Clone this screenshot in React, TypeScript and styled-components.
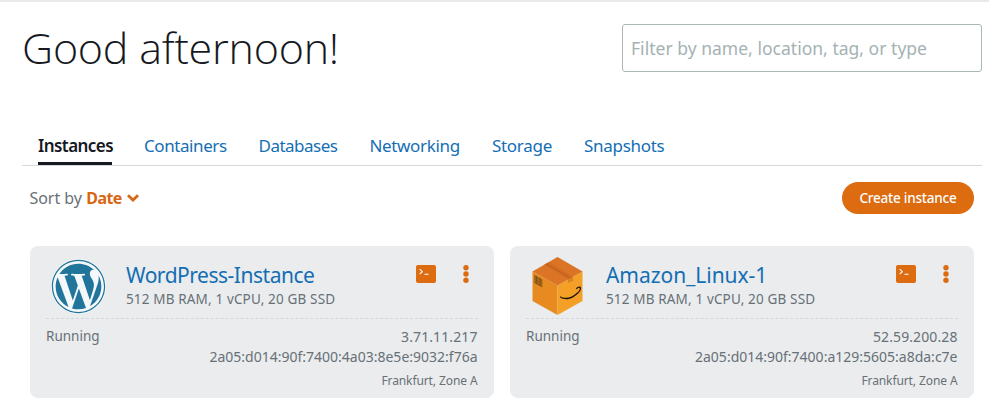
import React from "react";
import styled, { createGlobalStyle } from "styled-components";
import { FaWordpress } from "react-icons/fa";

const GlobalStyle = createGlobalStyle`
  * { box-sizing: border-box; }
  body { margin: 0; background: #fff; font-family: "Noto Sans", "Open Sans", sans-serif; color: #687078; }
  button, input { font-family: inherit; }
`;

const Page = styled.main`
  height: 411px;
  overflow: hidden;
  padding: 22px 7px 0 22px;
  border-top: 2px solid #e9e9ea;
`;

const Header = styled.header`
  display: flex;
  justify-content: space-between;
  height: 108px;
`;

const Title = styled.h1`
  margin: -8px 0 0;
  font-family: "Open Sans", sans-serif;
  font-size: 43px;
  font-weight: 300;
  line-height: 64px;
  letter-spacing: -0.22px;
  color: #16191f;
  white-space: nowrap;
`;

const Filter = styled.input`
  width: 360px;
  height: 48px;
  padding: 0 8px 1px;
  border: 1px solid #aab7b8;
  border-radius: 3px;
  font-size: 17.5px;
  letter-spacing: 0.02px;
  outline: none;
  color: #16191f;
  &::placeholder { color: #a4b2b3; opacity: 1; }
`;

const Tabs = styled.nav`
  display: flex;
  gap: 32px;
  height: 34px;
  padding-left: 16px;
  border-bottom: 1px solid #d5dbdb;
`;

const Tab = styled.a<{ $width: number; $spacing: number; $active?: boolean }>`
  width: ${(p) => p.$width}px;
  height: 33px;
  font-size: 17px;
  line-height: 28px;
  letter-spacing: ${(p) => p.$spacing}px;
  white-space: nowrap;
  font-weight: ${(p) => (p.$active ? 600 : 400)};
  color: ${(p) => (p.$active ? "#16191f" : "#146eb4")};
  border-bottom: ${(p) => (p.$active ? "3px solid #16191f" : "none")};
`;

const Toolbar = styled.div`
  display: flex;
  justify-content: space-between;
  align-items: center;
  height: 32px;
  margin: 16px 8px 32px 7.5px;
`;

const Sort = styled.div`
  display: flex;
  align-items: center;
  font-size: 16px;
  line-height: 24px;
  letter-spacing: -0.05px;
  white-space: nowrap;
  svg { margin-left: 4px; }
`;

const SortValue = styled.b`
  margin-left: 4.5px;
  font-weight: 700;
  letter-spacing: -0.6px;
  color: #d86613;
`;

const CreateButton = styled.button`
  width: 132px;
  height: 32px;
  padding: 0;
  border: 0;
  border-radius: 16px;
  background: #dd6b10;
  color: #fff;
  font-size: 13.5px;
  font-weight: 500;
  letter-spacing: -0.22px;
`;

const Cards = styled.section`
  display: grid;
  grid-template-columns: 464px 464px;
  gap: 16px;
  margin-left: 8px;
`;

const Card = styled.article`
  height: 152px;
  padding: 8px 16px;
  border-radius: 8px;
  background: #eaeced;
`;

const CardTop = styled.div`
  display: flex;
  height: 65px;
  border-bottom: 1px dashed #d2d8d9;
`;

const Logo = styled.div`
  width: 64px;
  height: 64px;
  flex: none;
  display: grid;
  place-items: center;
`;

const WordPressDisc = styled.div`
  display: grid;
  width: 55px;
  height: 55px;
  border-radius: 50%;
  background: #f4f8fa;
  color: #21759b;
`;

const Summary = styled.div`
  flex: 1;
  margin: 6px 0 0 16px;
  white-space: nowrap;
`;

const Name = styled.h2<{ $spacing: number }>`
  margin: 0;
  font-size: 21px;
  font-weight: 400;
  line-height: 30px;
  letter-spacing: ${(p) => p.$spacing}px;
  color: #146eb4;
`;

const Spec = styled.div`
  font-size: 13.5px;
  line-height: 18px;
  letter-spacing: 0.15px;
`;

const Actions = styled.div`
  display: flex;
  gap: 27px;
  margin: 11px 9px 0 0;
`;

const Details = styled.div`
  display: flex;
  justify-content: space-between;
  padding-top: 7px;
  font-size: 13.5px;
  line-height: 21px;
`;

const Address = styled.div`
  text-align: right;
  font-size: 14px;
  line-height: 20px;
  padding: 1px 0.5px 0 0;
`;

const IPv4 = styled.div`
  letter-spacing: 0.1px;
`;

const IPv6 = styled.div`
  white-space: nowrap;
`;

const Zone = styled.div`
  margin-top: 5px;
  font-size: 12px;
  line-height: 18px;
  letter-spacing: -0.1px;
`;

const Chevron = () => (
  <svg width="14" height="10" viewBox="0 0 14 10" fill="none">
    <path d="M2 2.2 7 7l5-4.8" stroke="#d86613" strokeWidth="2.8" />
  </svg>
);

const Terminal = () => (
  <svg width="20" height="18" viewBox="0 0 20 18">
    <rect width="20" height="18" rx="2" fill="#dd6b10" />
    <path d="m3.7 4.2 2.6 2.5-2.6 2.5M8.4 9.3h4.2" fill="none" stroke="#fff" strokeWidth="1.1" />
  </svg>
);

const Dots = () => (
  <svg width="6" height="18" viewBox="0 0 6 18" fill="#dd6b10">
    <circle cx="3" cy="2.8" r="2.7" />
    <circle cx="3" cy="9" r="2.7" />
    <circle cx="3" cy="15.2" r="2.7" />
  </svg>
);

const Package = () => (
  <svg width="64" height="64" viewBox="0 0 64 64">
    <path d="M6.5 17.5 31.5 31.5V61L6.5 47Z" fill="#e78b20" />
    <path d="m56.5 17.5-25 14V61l25-14Z" fill="#f4a026" />
    <path d="m31.5 3 25 14.5-25 14-25-14Z" fill="#db7425" />
    <path d="M23 8 47 22.8l-5 2.8L18 10.8Z" fill="#d46c24" />
    <path d="m20 9.8 25 14.4" stroke="#b35a1e" strokeWidth=".9" />
    <path d="m42 25.6 5-2.8v4.4l-2.3.2-2.7 1.8Z" fill="#d58420" />
    <path d="m8 20.5 8.5 4.7v8.6L8 29Z" fill="#b0701c" />
    <path d="m8.5 22.5 7.5 4.2m-7.5-1.4L16 29.5m-7.5-1.4 7.5 4.2M10.5 22v8m3.5-6v8" stroke="#7b4d16" strokeWidth=".8" />
    <path d="M34 42.3c6 3.4 12.5 1.1 18.7-5.1l.7.7C47.5 44.7 40 47.5 34 43.3Z" fill="#17110a" />
    <path d="M50.2 34.8c1.5-1.3 3.2-1.8 4-1.4.5.8-.1 2.8-1 4.2" fill="none" stroke="#17110a" strokeWidth="1.2" />
  </svg>
);

const tabs = [
  { label: "Instances", width: 74, spacing: -0.56 },
  { label: "Containers", width: 82.5, spacing: -0.42 },
  { label: "Databases", width: 79, spacing: -0.5 },
  { label: "Networking", width: 90.5, spacing: -0.35 },
  { label: "Storage", width: 60, spacing: -0.3 },
  { label: "Snapshots", width: 81, spacing: -0.3 },
];

const instances = [
  {
    name: "WordPress-Instance", spacing: -0.48, wordpress: true,
    ip: "3.71.11.217", ipv6: "2a05:d014:90f:7400:4a03:8e5e:9032:f76a",
  },
  {
    name: "Amazon_Linux-1", spacing: -0.05, wordpress: false,
    ip: "52.59.200.28", ipv6: "2a05:d014:90f:7400:a129:5605:a8da:c7e",
  },
];

export default function App() {
  return (
    <>
      <GlobalStyle />
      <Page>
        <Header>
          <Title>Good afternoon!</Title>
          <Filter placeholder="Filter by name, location, tag, or type" />
        </Header>
        <Tabs>
          {tabs.map((t, i) => (
            <Tab key={t.label} $width={t.width} $spacing={t.spacing} $active={i === 0}>{t.label}</Tab>
          ))}
        </Tabs>
        <Toolbar>
          <Sort>Sort by <SortValue>Date</SortValue><Chevron /></Sort>
          <CreateButton>Create instance</CreateButton>
        </Toolbar>
        <Cards>
          {instances.map((n) => (
            <Card key={n.name}>
              <CardTop>
                <Logo>
                  {n.wordpress ? <WordPressDisc><FaWordpress size={55} /></WordPressDisc> : <Package />}
                </Logo>
                <Summary>
                  <Name $spacing={n.spacing}>{n.name}</Name>
                  <Spec>512 MB RAM, 1 vCPU, 20 GB SSD</Spec>
                </Summary>
                <Actions><Terminal /><Dots /></Actions>
              </CardTop>
              <Details>
                <span>Running</span>
                <Address>
                  <IPv4>{n.ip}</IPv4>
                  <IPv6>{n.ipv6}</IPv6>
                  <Zone>Frankfurt, Zone A</Zone>
                </Address>
              </Details>
            </Card>
          ))}
        </Cards>
      </Page>
    </>
  );
}
